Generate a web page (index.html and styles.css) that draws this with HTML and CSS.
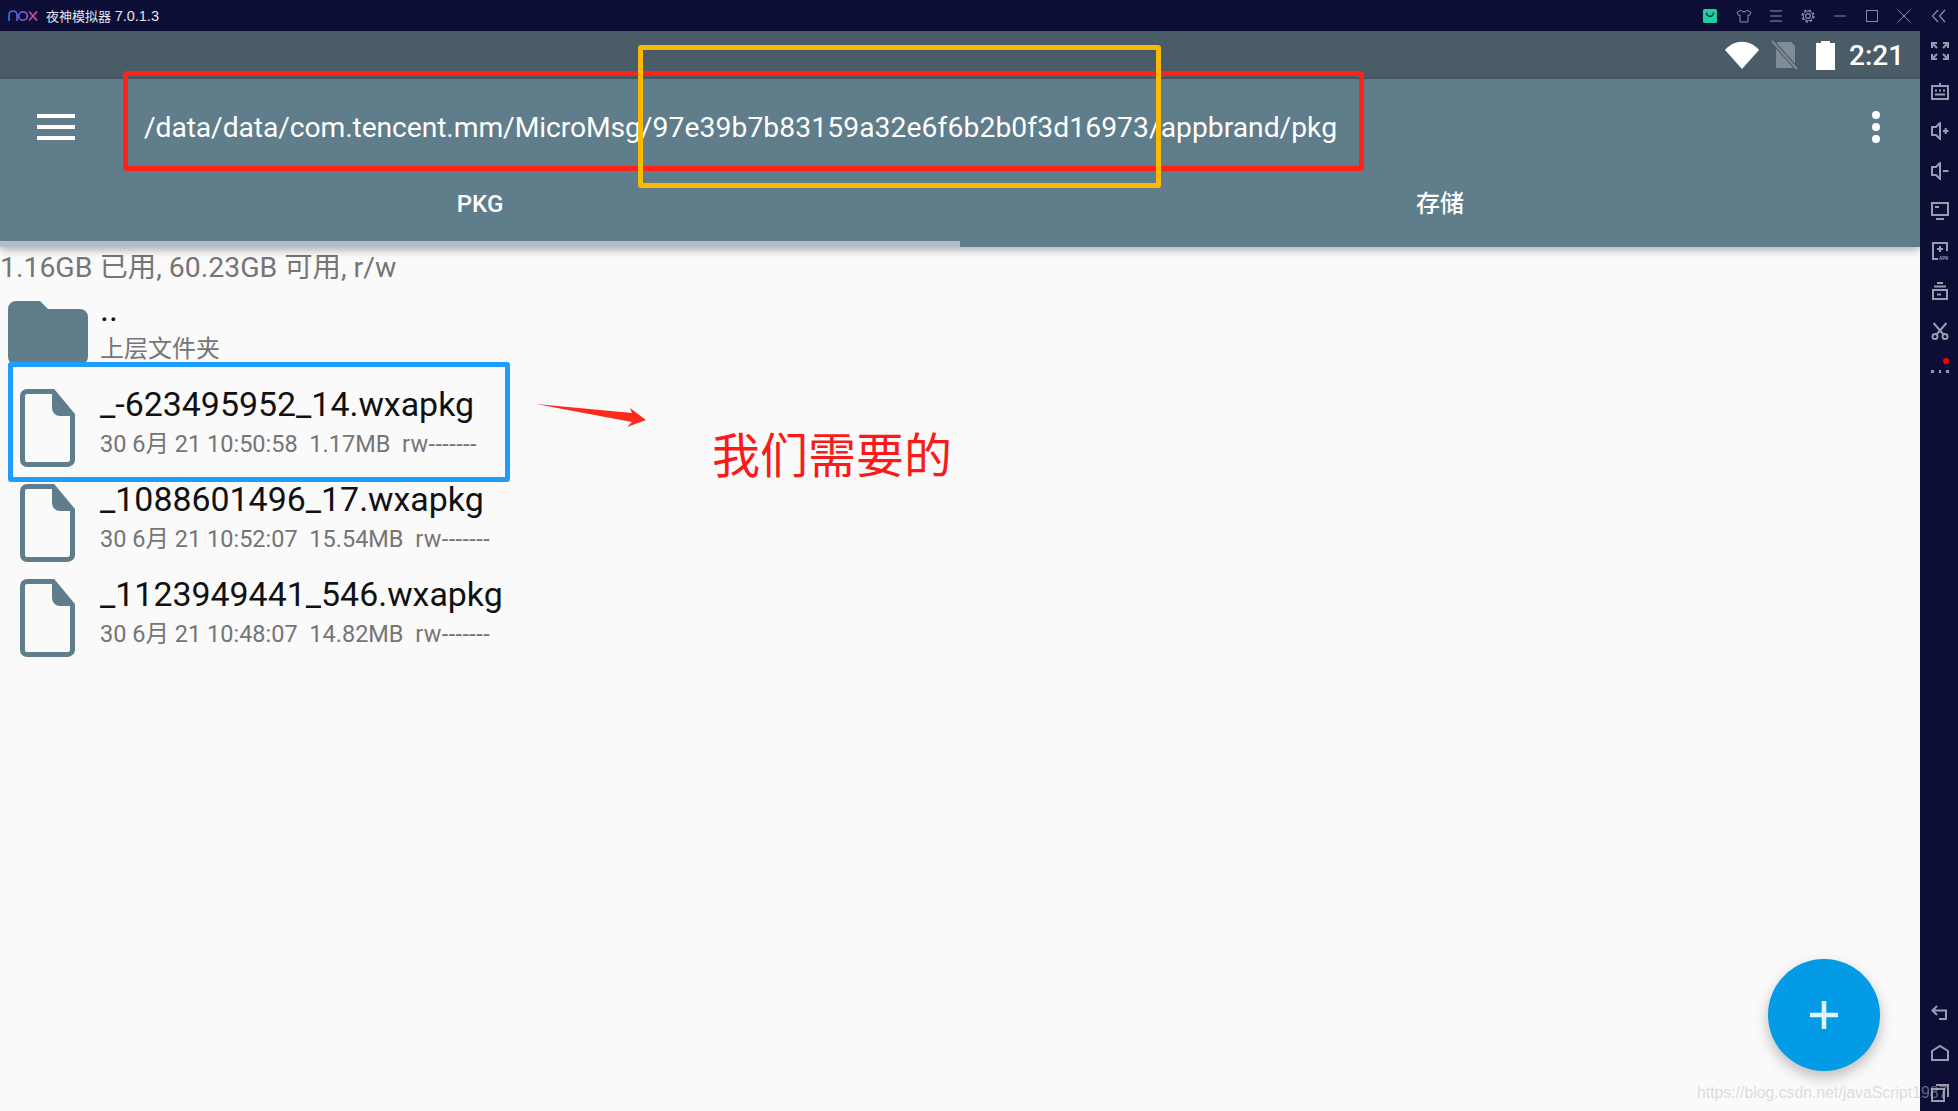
FILE: index.html
```html
<!DOCTYPE html>
<html lang="zh">
<head>
<meta charset="utf-8">
<title>夜神模拟器</title>
<link rel="stylesheet" href="styles.css">
</head>
<body>
<div class="app">
  <header class="titlebar">
    <svg class="logo" viewBox="0 0 30 12" fill="none" stroke="url(#noxg)" stroke-width="1.6">
      <defs><linearGradient id="noxg" gradientUnits="userSpaceOnUse" x1="0" x2="30" y1="0" y2="0"><stop offset="0" stop-color="#2f7bf0"/><stop offset=".5" stop-color="#8a5bd8"/><stop offset="1" stop-color="#ee4d9b"/></linearGradient></defs>
      <path d="M1 11V5a4 4 0 0 1 8 0v6"/><circle cx="15" cy="6" r="4.3"/><path d="M21 1.5l8 9M29 1.5l-8 9"/>
    </svg>
    <span class="title-text">夜神模拟器 <span class="ver">7.0.1.3</span></span>
    <div class="title-icons">
      <svg class="ticon" viewBox="0 0 14 14" fill="none"><rect width="14" height="14" rx="1.5" fill="#1fcf9c"/><path d="M3.500 3.500c0 5 7 5 7 0" stroke="#0f3d4a" stroke-width="1.400"/></svg>
      <svg class="ticon wide" viewBox="0 0 16 14" fill="none" stroke="#8d8ea6" stroke-width="1"><path d="M5 1L1 3.500l1.500 3L4 5.800V13h8V5.800l1.500.7 1.500-3L11 1c-.5 2.500-5.500 2.500-6 0z"/></svg>
      <svg class="ticon wide" viewBox="0 0 16 14" stroke="#8d8ea6" stroke-width="1"><path d="M2 2h12M2 7h12M2 12h12"/></svg>
      <svg class="ticon wide" viewBox="0 0 16 14" fill="none" stroke="#8d8ea6"><circle cx="8" cy="7" r="2.400" stroke-width="1.200"/><circle cx="8" cy="7" r="4.800" stroke-width="1"/><circle cx="8" cy="7" r="5.900" stroke-width="1.500" stroke-dasharray="2.300 2.330"/></svg>
      <svg class="ticon wide" viewBox="0 0 16 14" stroke="#8d8ea6" stroke-width="1"><path d="M2 7h12"/></svg>
      <svg class="ticon wide" viewBox="0 0 16 14" fill="none" stroke="#8d8ea6" stroke-width="1"><rect x="2.500" y="1.500" width="11" height="11"/></svg>
      <svg class="ticon wide" viewBox="0 0 16 14" stroke="#8d8ea6" stroke-width="1"><path d="M2 1l12 12M14 1L2 13"/></svg>
      <svg class="ticon wide last" viewBox="0 0 16 14" fill="none" stroke="#8d8ea6" stroke-width="1.200"><path d="M7 1L1.500 7 7 13M14 1L8.500 7 14 13"/></svg>
    </div>
  </header>

  <div class="workspace">
    <main class="screen">
      <div class="statusbar">
        <svg class="st-wifi" viewBox="0 0 34 28"><path d="M0 9C9 -2 25 -2 34 9L17 28z" fill="#fff"/></svg>
        <svg class="st-sim" viewBox="0 0 26 30"><path d="M6 2h13l4 4v22H4V4z" fill="#fff" opacity=".3"/><path d="M1 2l24 27" stroke="#4a5c67" stroke-width="4"/><path d="M0 1l25 28" stroke="#fff" opacity=".3" stroke-width="2"/></svg>
        <svg class="st-batt" viewBox="0 0 19 29"><path d="M5 0h9v2h5v27H0V2h5z" fill="#fff"/></svg>
        <span class="st-time">2:21</span>
      </div>
      <div class="toolbar">
        <div class="pathrow">
          <div class="hamburger"><i></i><i></i><i></i></div>
          <div class="path"><span class="path-head">/data/data/com.tencent.mm/MicroMsg</span><span class="path-hash">/97e39b7b83159a32e6f6b2b0f3d16973</span>/appbrand/pkg</div>
          <div class="overflow"><i></i><i></i><i></i></div>
        </div>
        <div class="tabs">
          <div class="tab active">PKG</div>
          <div class="tab">存储</div>
        </div>
      </div>
      <div class="content">
        <div class="storage">1.16GB 已用, 60.23GB 可用, r/w</div>
        <div class="row">
          <svg class="folder" viewBox="0 0 80 64"><path d="M8 0h24l8 8h32a8 8 0 0 1 8 8v40a8 8 0 0 1-8 8H8a8 8 0 0 1-8-8V8a8 8 0 0 1 8-8z" fill="#607d8b"/></svg>
          <div class="info"><div class="name">..</div><div class="meta cjk">上层文件夹</div></div>
        </div>
        <div class="row">
          <svg class="file" viewBox="0 0 55 78"><path d="M7 2.500h26L52.500 26v44a5 5 0 0 1-5 5.500H7A4.500 4.500 0 0 1 2.500 71V7A4.500 4.500 0 0 1 7 2.500z" fill="none" stroke="#607d8b" stroke-width="5"/><path d="M32 2l21 25H40a8 8 0 0 1-8-8z" fill="#607d8b"/></svg>
          <div class="info"><div class="name">_-623495952_14.wxapkg</div><div class="meta">30 6月 21 10:50:58&nbsp; 1.17MB&nbsp; <span class="perm">rw-------</span></div></div>
        </div>
        <div class="row">
          <svg class="file" viewBox="0 0 55 78"><path d="M7 2.500h26L52.500 26v44a5 5 0 0 1-5 5.500H7A4.500 4.500 0 0 1 2.500 71V7A4.500 4.500 0 0 1 7 2.500z" fill="none" stroke="#607d8b" stroke-width="5"/><path d="M32 2l21 25H40a8 8 0 0 1-8-8z" fill="#607d8b"/></svg>
          <div class="info"><div class="name">_1088601496_17.wxapkg</div><div class="meta">30 6月 21 10:52:07&nbsp; 15.54MB&nbsp; <span class="perm">rw-------</span></div></div>
        </div>
        <div class="row">
          <svg class="file" viewBox="0 0 55 78"><path d="M7 2.500h26L52.500 26v44a5 5 0 0 1-5 5.500H7A4.500 4.500 0 0 1 2.500 71V7A4.500 4.500 0 0 1 7 2.500z" fill="none" stroke="#607d8b" stroke-width="5"/><path d="M32 2l21 25H40a8 8 0 0 1-8-8z" fill="#607d8b"/></svg>
          <div class="info"><div class="name">_1123949441_546.wxapkg</div><div class="meta">30 6月 21 10:48:07&nbsp; 14.82MB&nbsp; <span class="perm">rw-------</span></div></div>
        </div>
      </div>
    </main>
    <aside class="sidebar">
      <div class="side-group">
        <svg class="sicon" viewBox="0 0 18 18" fill="none" stroke="#9a9bb0" stroke-width="2"><path d="M1 6V1h5M1 1l5 5M12 1h5v5M17 1l-5 5M1 12v5h5M1 17l5-5M17 12v5h-5M17 17l-5-5"/></svg>
        <svg class="sicon" viewBox="0 0 18 18" fill="none" stroke="#9a9bb0" stroke-width="2"><rect x="1" y="4" width="16" height="13"/><path d="M9 4V1M4 8.500h2M8 8.500h2M12 8.500h2M4 12.500h10"/></svg>
        <svg class="sicon" viewBox="0 0 18 18" fill="none" stroke="#9a9bb0" stroke-width="2"><path d="M9 1L5 5H1v8h4l4 4zM12 9h5.500M14.700 6v6"/></svg>
        <svg class="sicon" viewBox="0 0 18 18" fill="none" stroke="#9a9bb0" stroke-width="2"><path d="M9 1L5 5H1v8h4l4 4zM12 9h5.500"/></svg>
        <svg class="sicon" viewBox="0 0 18 18" fill="none" stroke="#9a9bb0" stroke-width="2"><rect x="1" y="1" width="16" height="12"/><path d="M4 5h4M5 17h8"/></svg>
        <svg class="sicon" viewBox="0 0 18 18" fill="none" stroke="#9a9bb0" stroke-width="2"><path d="M16 9V1H2v16h5M9 4v6M6 7h6"/><text x="8" y="17.500" class="apk">APK</text></svg>
        <svg class="sicon" viewBox="0 0 18 18" fill="none" stroke="#9a9bb0" stroke-width="2"><path d="M6 1h6M3 4.500h12"/><rect x="2" y="8" width="14" height="9"/><path d="M6 12.500h4"/></svg>
        <svg class="sicon" viewBox="0 0 18 18" fill="none" stroke="#9a9bb0" stroke-width="2"><circle cx="4" cy="14.500" r="2.500"/><circle cx="14" cy="14.500" r="2.500"/><path d="M5.500 12.500L15.500 1M12.500 12.500L2.500 1"/></svg>
        <div class="more"><i></i><i></i><i></i><b></b></div>
      </div>
      <div class="side-group">
        <svg class="sicon" viewBox="0 0 18 18" fill="none" stroke="#9a9bb0" stroke-width="2"><path d="M6 2L1.500 6.500 6 11M2 6.500h13v8.500H8"/></svg>
        <svg class="sicon" viewBox="0 0 18 18" fill="none" stroke="#9a9bb0" stroke-width="2"><path d="M1 7l8-5 8 5v9H1z"/></svg>
        <svg class="sicon" viewBox="0 0 18 18" fill="none" stroke="#9a9bb0" stroke-width="2"><rect x="1" y="5" width="12" height="12"/><path d="M5 1h12v12"/></svg>
      </div>
    </aside>
  </div>

  <div class="box box-red"></div>
  <div class="box box-yellow"></div>
  <div class="box box-blue"></div>
  <svg class="arrow" viewBox="0 0 112 26"><polygon points="0,1 96,10 94,5 110,17 91,24 96,19" fill="#fb2a1c"/></svg>
  <div class="note">我们需要的</div>
  <button class="fab"><svg viewBox="0 0 28 28"><path d="M14 0v28M0 14h28" stroke="#e1f5fe" stroke-width="4.500"/></svg></button>
  <div class="watermark">https://blog.csdn.net/javaScript1987</div>
</div>
</body>
</html>
```

FILE: styles.css
```css
* { box-sizing: border-box; }
html, body { margin: 0; padding: 0; }
body { font-family: Roboto, "Noto Sans CJK SC", sans-serif; overflow: hidden; }
.app { position: relative; width: 1958px; height: 1111px; display: flex; flex-direction: column; overflow: hidden; background: #0d0e35; }

.titlebar { height: 31px; flex: none; display: flex; align-items: center; padding-left: 8px; background: #0d0e35; color: #e4e4ee; }
.logo { width: 30px; height: 12px; margin-right: 8px; }
.title-text { font-size: 13px; font-family: "Liberation Sans", "Noto Sans CJK SC", sans-serif; }
.ver { font-size: 14.5px; }
.title-icons { margin-left: auto; display: flex; align-items: center; gap: 16px; padding-right: 11px; }
.ticon { width: 14px; height: 14px; margin-right: 3px; }
.ticon.wide { width: 16px; height: 14px; margin-right: 0; }
.ticon.last { width: 16px; margin-left: 3px; }

.workspace { flex: 1; display: flex; min-height: 0; }
.screen { width: 1920px; flex: none; display: flex; flex-direction: column; background: #fafafa; }

.statusbar { height: 48px; flex: none; display: flex; align-items: center; padding-left: 1725px; background: #4a5c67; color: #fff; }
.st-wifi { width: 34px; height: 28px; margin-right: 13px; }
.st-sim { width: 26px; height: 30px; margin-right: 18px; }
.st-batt { width: 19px; height: 29px; margin-right: 14px; }
.st-time { font-size: 28px; font-weight: 500; line-height: 34px; padding-top: 2px; }

.toolbar { height: 168px; flex: none; background: #607d8b; color: #fff; display: flex; flex-direction: column; position: relative; z-index: 1; box-shadow: 0 3px 8px rgba(0,0,0,.3); }
.pathrow { height: 88px; display: flex; align-items: center; padding-left: 37px; padding-top: 8px; }
.hamburger { width: 38px; display: flex; flex-direction: column; gap: 7px; margin-right: 69px; margin-top: -1px; }
.hamburger i { display: block; height: 4px; background: #fff; }
.path { font-size: 28.25px; line-height: 36px; flex: 1; white-space: nowrap; padding-top: 2px; }
.path-head { letter-spacing: -.09px; }
.path-hash { letter-spacing: .09px; }
.overflow { display: flex; flex-direction: column; gap: 4px; margin-right: 40px; margin-top: -1px; }
.overflow i { display: block; width: 8px; height: 8px; border-radius: 50%; background: #fff; }
.tabs { flex: 1; display: flex; }
.tab { width: 960px; font-size: 24px; line-height: 30px; font-weight: 500; text-align: center; padding-top: 22px; border-bottom: 6px solid transparent; }
.tab.active { border-bottom-color: #b0bec5; }

.content { flex: 1; display: flex; flex-direction: column; color: #757575; }
.storage { height: 31px; font-size: 28.4px; line-height: 42px; white-space: nowrap; }
.row { height: 95px; flex: none; display: flex; align-items: flex-start; }
.folder { width: 80px; height: 64px; margin: 23px 12px 0 8px; flex: none; }
.file { width: 55px; height: 78px; margin: 16px 25px 0 20px; flex: none; }
.info { padding-top: 11px; }
.name { font-size: 33.9px; line-height: 42px; color: #111; white-space: nowrap; }
.meta { font-size: 23.5px; line-height: 36px; white-space: nowrap; color: #757575; }
.perm { letter-spacing: .4px; }
.cjk { font-size: 24px; }

.sidebar { width: 38px; flex: none; display: flex; flex-direction: column; justify-content: space-between; padding: 11px 0 9px 2px; background: #0d0e35; }
.side-group { display: flex; flex-direction: column; align-items: center; gap: 22px; }
.sicon { width: 18px; height: 18px; flex: none; }
.apk { font: 700 4.5px "Liberation Sans", sans-serif; fill: #9a9bb0; stroke: none; }
.more { width: 18px; height: 18px; position: relative; display: flex; gap: 5px; align-items: center; justify-content: center; }
.more i { width: 3px; height: 3px; background: #9a9bb0; }
.more b { position: absolute; top: -4px; right: 0; width: 6px; height: 6px; border-radius: 50%; background: #f00; }

.box { position: absolute; z-index: 2; border: 5px solid; border-radius: 3px; }
.box-red { left: 123px; top: 71px; width: 1241px; height: 100px; border-color: #fb2418; }
.box-yellow { left: 638px; top: 45px; width: 523px; height: 143px; border-color: #fdb900; }
.box-blue { left: 8px; top: 362px; width: 502px; height: 120px; border-color: #1e9dfd; }
.arrow { position: absolute; left: 536px; top: 403px; width: 112px; height: 26px; }
.note { position: absolute; left: 712px; top: 418px; font-size: 48px; line-height: 68px; color: #fb1a1a; font-family: "Noto Sans CJK SC", sans-serif; white-space: nowrap; }
.fab { position: absolute; left: 1768px; top: 959px; width: 112px; height: 112px; padding: 0; border: 0; border-radius: 50%; background: #039be5; display: flex; align-items: center; justify-content: center; box-shadow: 0 6px 14px rgba(0,0,0,.25); }
.fab svg { width: 28px; height: 28px; }
.watermark { position: absolute; left: 1697px; top: 1083px; font: 15.8px/20px "Liberation Sans", sans-serif; color: rgba(190,190,190,.5); white-space: nowrap; }
```
